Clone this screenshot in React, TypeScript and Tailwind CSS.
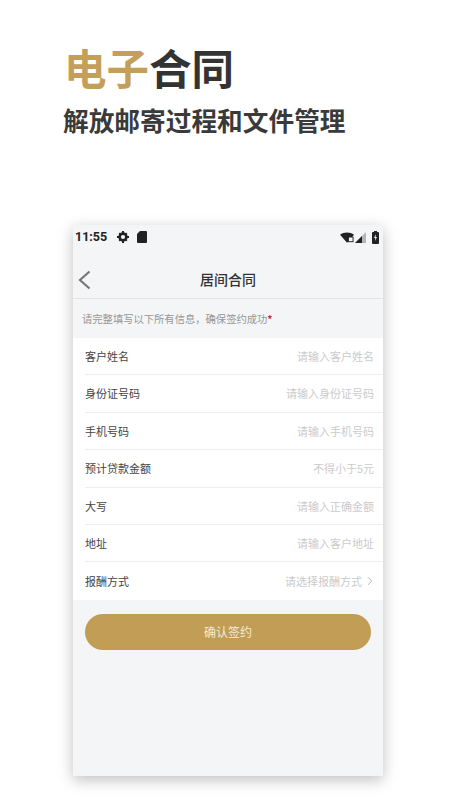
import { ChevronRight } from "lucide-react";

const rows = [
  { label: "客户姓名", hint: "请输入客户姓名" },
  { label: "身份证号码", hint: "请输入身份证号码" },
  { label: "手机号码", hint: "请输入手机号码" },
  { label: "预计贷款金额", hint: "不得小于5元" },
  { label: "大写", hint: "请输入正确金额" },
  { label: "地址", hint: "请输入客户地址" },
  { label: "报酬方式", hint: "请选择报酬方式", arrow: true },
];

const font = {
  fontFamily: '"Noto Sans CJK SC", "Noto Sans", sans-serif',
};

export default function App() {
  return (
    <div style={font} className="w-[450px] h-[800px] bg-white overflow-hidden">
      {/* Heading */}
      <div className="pl-[64px] pt-[38px]">
        <h1 className="text-[42.5px] leading-[58px] font-bold text-[#333333]">
          <span className="text-[#c49f5a]">电子</span>合同
        </h1>
        <p className="-ml-[1px] mt-[8px] text-[25.7px] leading-[32px] font-bold text-[#3a3a3a]">
          解放邮寄过程和文件管理
        </p>
      </div>

      {/* Phone */}
      <div className="ml-[73px] mt-[89px] w-[310px] h-[551px] bg-[#f4f5f7] shadow-[0_4px_14px_rgba(0,0,0,0.25)]">
        {/* Status bar */}
        <div className="h-[24px] flex items-center justify-between pl-[2px] pr-[4px]">
          <div className="flex items-center">
            <span className="w-[42px] text-[12.5px] font-bold text-[#222222]" style={{ fontFamily: "Roboto, sans-serif" }}>
              11:55
            </span>
            <svg width="12" height="12" viewBox="0 0 12 12" className="text-[#222222]">
              <circle cx="6" cy="6" r="3.4" fill="none" stroke="currentColor" strokeWidth="2.6" />
              <path d="M5 0h2v2H5zM5 10h2v2H5zM0 5h2v2H0zM10 5h2v2h-2zM1.5 2.9 2.9 1.5l1.4 1.4-1.4 1.4zM7.7 9.1l1.4-1.4 1.4 1.4-1.4 1.4zM9.1 1.5l1.4 1.4-1.4 1.4-1.4-1.4zM2.9 7.7l1.4 1.4-1.4 1.4-1.4-1.4z" fill="currentColor" />
            </svg>
            <svg width="10" height="12" viewBox="0 0 10 12" className="ml-[8px] text-[#222222]">
              <path d="M3 0h6a1 1 0 0 1 1 1v10a1 1 0 0 1-1 1H1a1 1 0 0 1-1-1V3z" fill="currentColor" />
            </svg>
          </div>
          <div className="flex items-center">
            <svg width="14" height="11" viewBox="0 0 15 11">
              <path d="M0 2.5C4-.8 11-.8 15 2.5L7.5 11z" fill="#222222" />
              <rect x="9" y="5" width="5" height="5" fill="#f4f5f7" stroke="#222222" />
            </svg>
            <svg width="11" height="11" viewBox="0 0 11 11" className="ml-[1px]">
              <path d="M11 0v11H0z" fill="#b5b5b5" />
              <path d="M7 4v7H0z" fill="#222222" />
            </svg>
            <svg width="7" height="13" viewBox="0 0 7 13" className="ml-[6px]">
              <path d="M2 0h3v1h1a1 1 0 0 1 1 1v10a1 1 0 0 1-1 1H1a1 1 0 0 1-1-1V2a1 1 0 0 1 1-1h1z" fill="#222222" />
              <path d="M3.8 3 2 7h1.3L3 10l2-4H3.6z" fill="#f4f5f7" />
            </svg>
          </div>
        </div>

        {/* Nav */}
        <div className="relative h-[50px] flex items-center justify-center border-b border-[#e3e3e3]">
          <svg width="13" height="20" viewBox="0 0 13 20" className="absolute left-[5px] top-[21px]">
            <path d="M11.5 1.5 2 10l9.5 8.5" fill="none" stroke="#777777" strokeWidth="2.2" />
          </svg>
          <span className="mt-[11px] text-[14px] font-medium text-[#333333]">居间合同</span>
        </div>

        {/* Notice */}
        <div className="h-[39px] flex items-center pl-[9px] text-[10.3px] text-[#969696]">
          请完整填写以下所有信息，确保签约成功<span className="font-bold text-[#b3343c]">*</span>
        </div>

        {/* Form */}
        <div className="bg-white">
          {rows.map((row, i) => (
            <div
              key={row.label}
              className={`h-[37.4px] ml-[12px] pr-[9px] flex items-center justify-between ${
                i < rows.length - 1 ? "border-b border-[#eeeeee]" : ""
              }`}
            >
              <span className="text-[11px] text-[#444444]">{row.label}</span>
              <span className="flex items-center text-[11px] text-[#cbcbcb]">
                {row.hint}
                {row.arrow && <ChevronRight className="ml-[1px] -mr-[3px] text-[#a8a8a8]" size={14} strokeWidth={1.5} />}
              </span>
            </div>
          ))}
        </div>

        <button className="ml-[12px] mt-[14px] w-[286px] h-[36px] rounded-full bg-[#c19d55] text-[12px] text-[#f5ecd8]">
          确认签约
        </button>
      </div>
    </div>
  );
}
